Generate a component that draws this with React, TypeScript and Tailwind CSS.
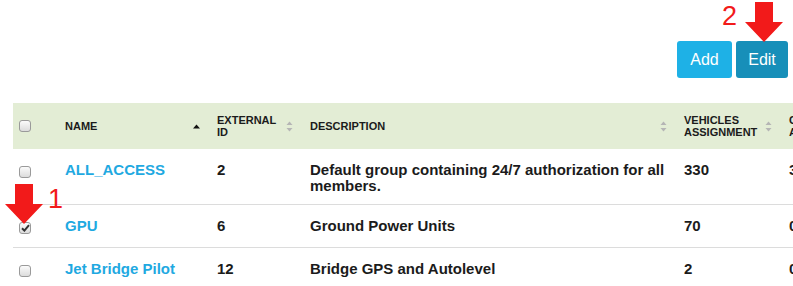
import React from "react";

const rows = [
  { name: "ALL_ACCESS", ext: "2", desc: "Default group containing 24/7 authorization for all members.", veh: "330", next: "3", checked: false },
  { name: "GPU", ext: "6", desc: "Ground Power Units", veh: "70", next: "0", checked: true },
  { name: "Jet Bridge Pilot", ext: "12", desc: "Bridge GPS and Autolevel", veh: "2", next: "0", checked: false },
];

const cols = "grid grid-cols-[39px_152px_93px_374px_105px_60px]";

function Box({ checked }: { checked?: boolean }) {
  return (
    <div className="w-[12px] h-[12px] rounded-[3px] border border-[#9a9a9a] bg-gradient-to-b from-[#fbfbfb] to-[#dcdcdc] flex items-center justify-center">
      {checked && (
        <svg width="9" height="8" viewBox="0 0 9 8">
          <path d="M1 4.2 L3.4 6.6 L8 1.2" stroke="#333" strokeWidth="2" fill="none" />
        </svg>
      )}
    </div>
  );
}

function SortBoth() {
  return (
    <svg width="7" height="11" viewBox="0 0 7 11" className="shrink-0">
      <path d="M0.5 4 L3.5 0.5 L6.5 4 Z" fill="#b5b5b5" />
      <path d="M0.5 7 L3.5 10.5 L6.5 7 Z" fill="#b5b5b5" />
    </svg>
  );
}

function SortUp() {
  return (
    <svg width="7" height="5" viewBox="0 0 7 5" className="shrink-0">
      <path d="M0 4.5 L3.5 0.5 L7 4.5 Z" fill="#111" />
    </svg>
  );
}

function Arrow({ shaft }: { shaft: number }) {
  return (
    <svg width="38" height={shaft + 20} viewBox={`0 0 38 ${shaft + 20}`}>
      <path d={`M10 0 H28 V${shaft} H38 L19 ${shaft + 20} L0 ${shaft} H10 Z`} fill="#f21a1a" />
    </svg>
  );
}

function Head({ label, children }: { label: React.ReactNode; children?: React.ReactNode }) {
  return (
    <div className="flex items-center justify-between pl-[13px] pr-[4px] text-[11px] leading-[12px] font-bold uppercase text-[#1b1b1b]">
      <span>{label}</span>
      {children}
    </div>
  );
}

export default function App() {
  return (
    <div className="relative w-[793px] h-[286px] overflow-hidden bg-white font-['Liberation_Sans',Arial,sans-serif]">
      <div className="flex justify-end gap-[4px] pt-[41px] pr-[5px]">
        <button className="w-[55px] h-[37px] rounded-[3px] bg-[#1eb1e6] text-white text-[16px]">Add</button>
        <button className="w-[52px] h-[37px] rounded-[3px] bg-[#178fb9] text-white text-[16px]">Edit</button>
      </div>

      <div className="mt-[25px] ml-[13px] w-[900px]">
        <div className={`${cols} h-[46px] bg-[#e3edd5]`}>
          <div className="flex items-center pl-[6px]">
            <Box />
          </div>
          <Head label="Name"><SortUp /></Head>
          <Head label={<>External<br />ID</>}><SortBoth /></Head>
          <Head label="Description"><SortBoth /></Head>
          <Head label={<>Vehicles<br />Assignment</>}><SortBoth /></Head>
          <div className="flex items-center pl-[13px] text-[11px] leading-[12px] font-bold uppercase text-[#1b1b1b]">
            <span>C<br />A</span>
          </div>
        </div>

        {rows.map((r, i) => (
          <div key={i} className={`${cols} pt-[13px] pb-[10px] min-h-[43px] text-[15px] leading-[16px] text-[#1b1b1b] font-bold ${i < rows.length - 1 ? "border-b border-[#dcdcdc]" : ""}`}>
            <div className="pl-[6px] pt-[4px]">
              <Box checked={r.checked} />
            </div>
            <div className="pl-[13px] text-[#1fa9e1]">{r.name}</div>
            <div className="pl-[13px]">{r.ext}</div>
            <div className="pl-[13px] pr-[6px]">{r.desc}</div>
            <div className="pl-[13px]">{r.veh}</div>
            <div className="pl-[13px]">{r.next}</div>
          </div>
        ))}
      </div>

      <div className="absolute left-[722px] top-[3px] text-[27px] leading-[27px] text-[#f21a1a]">2</div>
      <div className="absolute left-[745px] top-[2px]">
        <Arrow shaft={20} />
      </div>

      <div className="absolute left-[48px] top-[186px] text-[27px] leading-[27px] text-[#f21a1a]">1</div>
      <div className="absolute left-[5px] top-[184px]">
        <Arrow shaft={20} />
      </div>
    </div>
  );
}
